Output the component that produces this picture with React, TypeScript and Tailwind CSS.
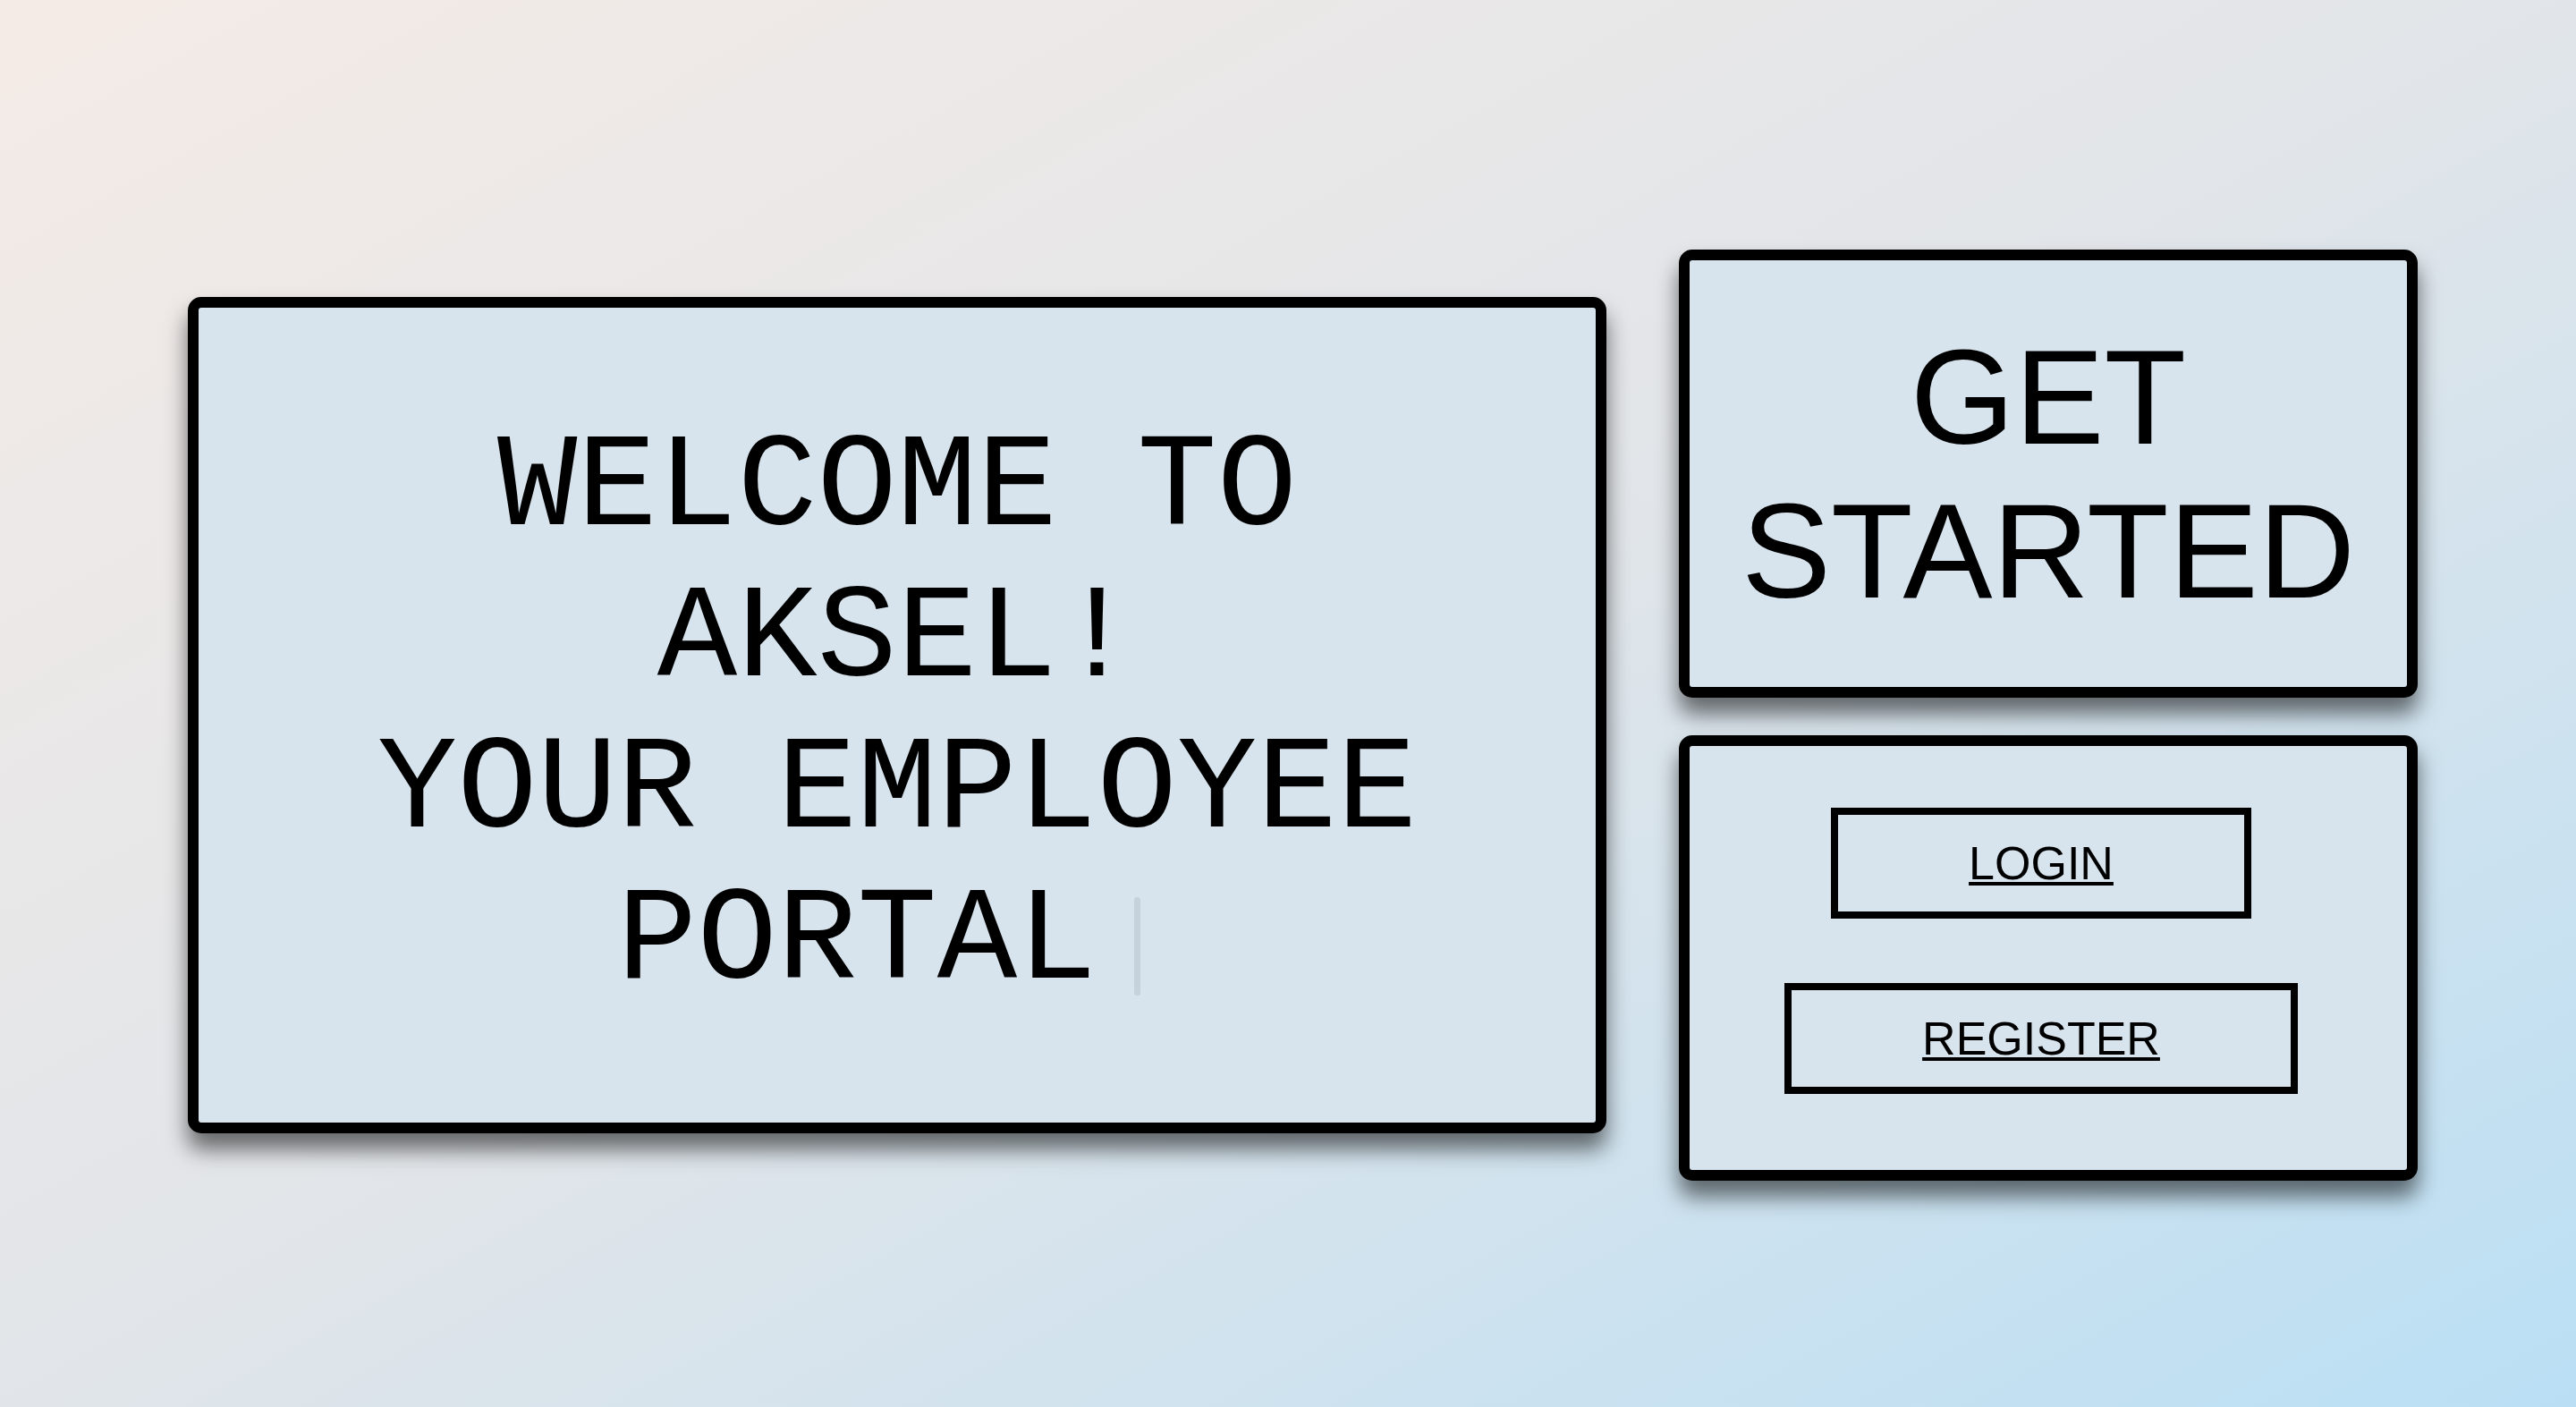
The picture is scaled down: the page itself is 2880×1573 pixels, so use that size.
import React from 'react';

const mono = { fontFamily: '"Courier New", "Liberation Mono", monospace' };
const sans = { fontFamily: '"Liberation Sans", Arial, Helvetica, sans-serif' };

const panel =
  'bg-[#d8e4ed] border-[12px] border-black rounded-[15px] shadow-[0_18px_24px_rgba(0,0,0,0.55)]';

const AuthButton: React.FC<{ label: string }> = ({ label }) => (
  <button
    className="border-8 border-black px-[146px] py-6 text-[52px] leading-[60px] text-black underline decoration-[4px] underline-offset-[3px]"
    style={sans}
  >
    {label}
  </button>
);

const App: React.FC = () => {
  return (
    <div className="min-h-screen w-full bg-linear-to-br from-[#f4ebe6] via-[#e1e5e9] to-[#badff4] flex items-center justify-center pl-[33px] pt-[26px]">
      <div className="flex items-center gap-[81px]">
        {/* Welcome panel */}
        <div className={`${panel} w-[1586px] h-[935px] flex items-center justify-center px-24`}>
          <h1 className="text-center text-black text-[149px] leading-[169px] font-normal" style={mono}>
            WELCOME TO AKSEL!
            <br />
            YOUR EMPLOYEE PORTAL
            <span className="inline-block w-[0.6em] text-center">
              <span className="inline-block w-[7px] h-[110px] rounded-full bg-[#c5d1db] align-[-20px]" />
            </span>
          </h1>
        </div>

        {/* Right column */}
        <div className="flex flex-col gap-[42px] w-[826px]">
          <button className={`${panel} h-[501px] w-full flex items-center justify-center`}>
            <span className="text-center text-black text-[150px] leading-[172px]" style={sans}>
              GET STARTED
            </span>
          </button>

          <div className={`${panel} h-[498px] w-full flex flex-col items-center justify-center gap-[72px] pr-4 pb-4`}>
            <AuthButton label="LOGIN" />
            <AuthButton label="REGISTER" />
          </div>
        </div>
      </div>
    </div>
  );
};

export default App;
